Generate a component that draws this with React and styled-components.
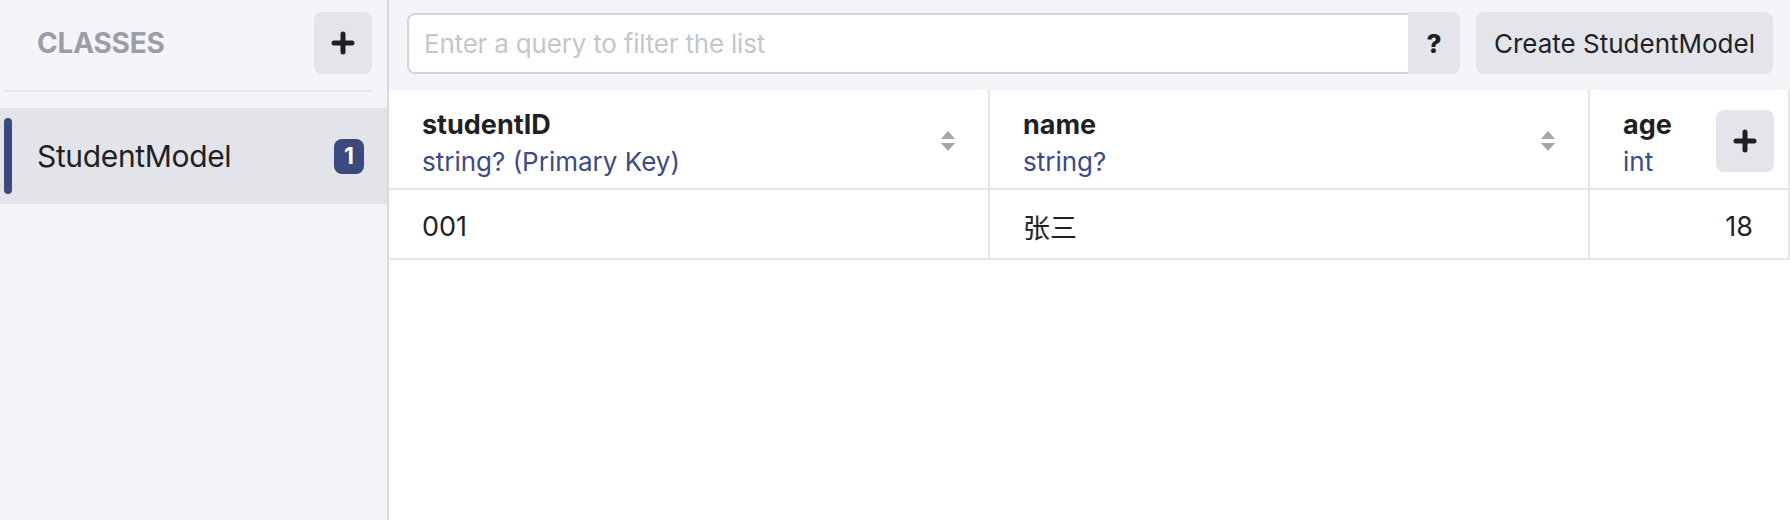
import React from 'react';
import styled, { createGlobalStyle } from 'styled-components';

const GlobalStyle = createGlobalStyle`
  html, body {
    margin: 0;
    padding: 0;
    background: #ffffff;
  }
  body {
    font-family: Inter, "Noto Sans", "Noto Sans CJK SC", sans-serif;
    color: #1f1f24;
  }
  * { box-sizing: border-box; }
`;

const Page = styled.div`
  display: flex;
  height: 520px;
  overflow: hidden;
`;

const Sidebar = styled.aside`
  width: 389px;
  flex: none;
  background: #f4f4f9;
  border-right: 2px solid #d9d9e0;
  display: flex;
  flex-direction: column;
`;

const SidebarHeader = styled.div`
  height: 92px;
  margin: 0 15px 0 4px;
  padding: 12px 0 0 33px;
  display: flex;
  justify-content: space-between;
  align-items: flex-start;
  border-bottom: 2px solid #e7e7ed;
`;

const SidebarTitle = styled.h2`
  margin: 0;
  line-height: 62px;
  font-size: 28px;
  font-weight: 700;
  letter-spacing: -0.2px;
  color: #9d9da7;
`;

const IconButton = styled.button`
  width: 58px;
  height: 62px;
  border: none;
  border-radius: 8px;
  background: #e4e5ea;
  display: flex;
  align-items: center;
  justify-content: center;
  padding: 0;
  cursor: pointer;
`;

const ClassList = styled.ul`
  list-style: none;
  margin: 16px 0 0;
  padding: 0;
`;

const ClassItem = styled.li`
  position: relative;
  height: 96px;
  padding: 0 23px 0 37px;
  display: flex;
  align-items: center;
  justify-content: space-between;
  background: ${(p) => (p.$selected ? '#e3e4e9' : 'transparent')};
  font-size: 30px;
  letter-spacing: -0.35px;
  color: #1f1f24;

  &::before {
    content: '';
    display: ${(p) => (p.$selected ? 'block' : 'none')};
    position: absolute;
    left: 4px;
    top: 10px;
    bottom: 10px;
    width: 8px;
    border-radius: 4px;
    background: #3a4a7e;
  }
`;

const Badge = styled.span`
  min-width: 30px;
  height: 35px;
  padding: 0 6px;
  border-radius: 8px;
  background: #3a4a7e;
  color: #ffffff;
  font-size: 23px;
  font-weight: 700;
  letter-spacing: 0;
  display: flex;
  align-items: center;
  justify-content: center;
`;

const Main = styled.main`
  flex: 1;
  display: flex;
  flex-direction: column;
  min-width: 0;
`;

const Toolbar = styled.div`
  height: 90px;
  flex: none;
  background: #f4f4f9;
  padding: 12px 17px 0 18px;
  display: flex;
  align-items: flex-start;
  gap: 16px;
`;

const SearchGroup = styled.div`
  flex: 1;
  display: flex;
  height: 62px;
`;

const SearchInput = styled.input`
  flex: 1;
  height: 61px;
  margin-top: 1px;
  border: 2px solid #d3d4dc;
  border-right: none;
  border-radius: 8px 0 0 8px;
  background: #ffffff;
  padding: 0 15px;
  font-family: Inter, "Noto Sans", sans-serif;
  font-size: 26px;
  letter-spacing: -0.2px;
  color: #1f1f24;
  outline: none;

  &::placeholder {
    color: #c5c6cd;
  }
`;

const HelpButton = styled.button`
  width: 52px;
  height: 62px;
  border: none;
  border-radius: 0 8px 8px 0;
  background: #e4e5ea;
  font-family: Inter, sans-serif;
  font-size: 26px;
  font-weight: 800;
  color: #1f1f24;
  padding: 0;
`;

const CreateButton = styled.button`
  height: 62px;
  padding: 0 18px;
  border: none;
  border-radius: 8px;
  background: #e4e5ea;
  font-family: Inter, sans-serif;
  font-size: 26px;
  color: #222226;
  white-space: nowrap;
`;

const Grid = styled.div`
  display: grid;
  grid-template-columns: 601px 600px 200px;
  background: #ffffff;
`;

const HeadCell = styled.div`
  height: 100px;
  padding: 4px ${(p) => (p.$action ? '14px' : '33px')} 0 33px;
  border-right: 2px solid #e5e5e9;
  border-bottom: 2px solid #e5e5e9;
  display: flex;
  align-items: center;
  justify-content: space-between;
`;

const HeadText = styled.div`
  display: flex;
  flex-direction: column;
  align-self: flex-start;
  margin-top: 12px;
`;

const FieldName = styled.span`
  font-size: 27px;
  font-weight: 700;
  line-height: 37px;
  color: #1f1f24;
`;

const FieldType = styled.span`
  font-size: 26px;
  line-height: 37px;
  color: #3b4b85;
`;

const Cell = styled.div`
  height: 70px;
  padding: 4px ${(p) => (p.$numeric ? '35px' : '33px')} 0;
  border-right: 2px solid #e5e5e9;
  border-bottom: 2px solid #e5e5e9;
  display: flex;
  align-items: center;
  justify-content: ${(p) => (p.$numeric ? 'flex-end' : 'flex-start')};
  font-size: 27px;
  color: #222226;
`;

const PlusIcon = () => (
  <svg width="24" height="24" viewBox="0 0 24 24">
    <path d="M12 3v18M3 12h18" stroke="#1f2024" strokeWidth="5" strokeLinecap="round" />
  </svg>
);

const SortIcon = () => (
  <svg width="14" height="20" viewBox="0 0 14 20">
    <path d="M7 0L14 8H0z" fill="#a5a5b0" />
    <path d="M7 20L14 12H0z" fill="#a5a5b0" />
  </svg>
);

const columns = [
  { name: 'studentID', type: 'string? (Primary Key)' },
  { name: 'name', type: 'string?' },
  { name: 'age', type: 'int' },
];

const rows = [{ studentID: '001', name: '张三', age: 18 }];

export default function App() {
  return (
    <Page>
      <GlobalStyle />
      <Sidebar>
        <SidebarHeader>
          <SidebarTitle>CLASSES</SidebarTitle>
          <IconButton aria-label="Add class">
            <PlusIcon />
          </IconButton>
        </SidebarHeader>
        <ClassList>
          <ClassItem $selected>
            StudentModel
            <Badge>1</Badge>
          </ClassItem>
        </ClassList>
      </Sidebar>
      <Main>
        <Toolbar>
          <SearchGroup>
            <SearchInput placeholder="Enter a query to filter the list" />
            <HelpButton>?</HelpButton>
          </SearchGroup>
          <CreateButton>Create StudentModel</CreateButton>
        </Toolbar>
        <Grid>
          {columns.map((col, i) => {
            const last = i === columns.length - 1;
            return (
              <HeadCell key={col.name} $action={last}>
                <HeadText>
                  <FieldName>{col.name}</FieldName>
                  <FieldType>{col.type}</FieldType>
                </HeadText>
                {last ? (
                  <IconButton aria-label="Add property">
                    <PlusIcon />
                  </IconButton>
                ) : (
                  <SortIcon />
                )}
              </HeadCell>
            );
          })}
          {rows.map((row) => (
            <React.Fragment key={row.studentID}>
              <Cell>{row.studentID}</Cell>
              <Cell>{row.name}</Cell>
              <Cell $numeric>{row.age}</Cell>
            </React.Fragment>
          ))}
        </Grid>
      </Main>
    </Page>
  );
}
